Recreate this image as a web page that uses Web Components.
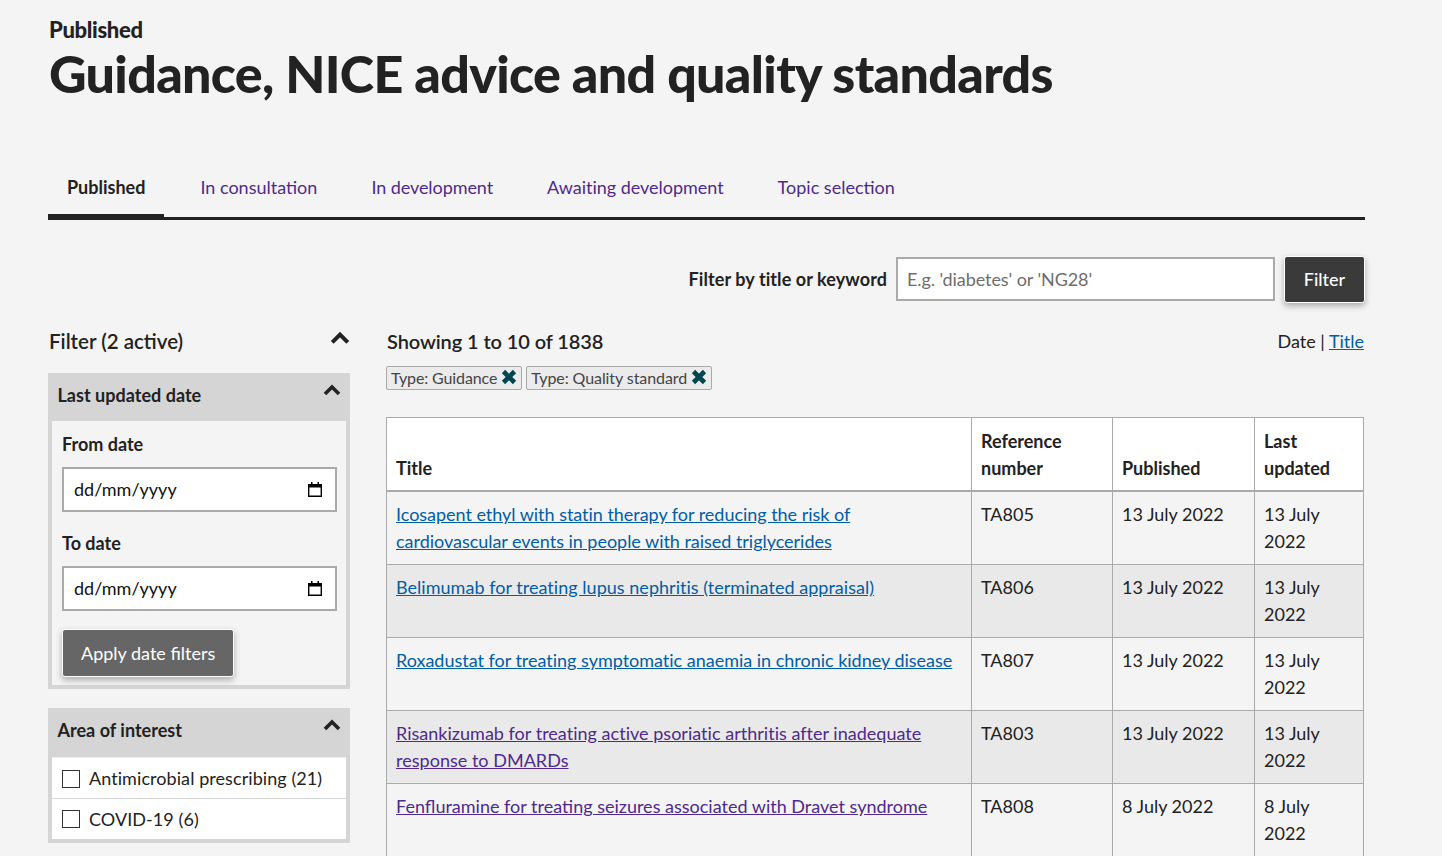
<!DOCTYPE html>
<html lang="en"><head><meta charset="utf-8"><title>Guidance, NICE advice and quality standards</title>
<style>
html,body{margin:0;padding:0;background:#f4f4f4;}
body{font:18px/27px Lato,"Open Sans",sans-serif;color:#222;height:856px;overflow:hidden;}
x-page{display:block;}
</style></head><body>
<x-page>
  <x-heading kicker="Published">Guidance, NICE advice and quality standards</x-heading>
  <x-tabs>
    <x-tab active>Published</x-tab>
    <x-tab>In consultation</x-tab>
    <x-tab style="letter-spacing:-.07px">In development</x-tab>
    <x-tab style="letter-spacing:-.02px">Awaiting development</x-tab>
    <x-tab>Topic selection</x-tab>
  </x-tabs>
  <x-search></x-search>
  <x-layout>
    <x-filters slot="side">
      <x-group title="Last updated date" variant="dates">
        <x-date label="From date"></x-date>
        <x-date label="To date"></x-date>
        <x-button>Apply date filters</x-button>
      </x-group>
      <x-group title="Area of interest" variant="checks">
        <x-check>Antimicrobial prescribing (21)</x-check>
        <x-check>COVID-19 (6)</x-check>
      </x-group>
    </x-filters>
    <x-results slot="main"></x-results>
  </x-layout>
</x-page>
<script>
const chevron=(w,h)=>`<svg width="${w}" height="${h}" viewBox="0 0 18 12" aria-hidden="true"><path d="M2 10 L9 3 L16 10" fill="none" stroke="#222" stroke-width="3.6" stroke-linejoin="miter"/></svg>`;
function def(name,css,html){
  customElements.define(name,class extends HTMLElement{
    constructor(){super();this.attachShadow({mode:'open'});}
    connectedCallback(){
      const h=typeof html==='function'?html(this):html;
      this.shadowRoot.innerHTML=`<style>${css}</style>${h}`;
    }
  });
}
def('x-heading',`:host{display:block;padding:16px 48px 0 49px}
p{margin:0;font-weight:900;font-size:22px;line-height:27px;letter-spacing:-.33px;color:#222}
h1{margin:0;font-weight:900;font-size:52px;line-height:61px;letter-spacing:-.7px;color:#222}`,
el=>`<p>${el.getAttribute('kicker')}</p><h1><slot></slot></h1>`);
def('x-tabs',`:host{display:flex;gap:18px;margin:53px 77px 0 48px;border-bottom:3px solid #222;height:60px;align-items:stretch}`,`<slot></slot>`);
def('x-tab',`:host{display:block;padding:17px 18px 0;color:#4f2a8c}
:host([active]){color:#222;font-weight:700;padding:17px 19px 0;border-bottom:6px solid #222;margin-bottom:-3px}`,`<slot></slot>`);
def('x-search',`:host{display:flex;justify-content:flex-end;align-items:flex-start;margin:37px 77px 0 48px;height:71px}
label{font-weight:700;line-height:45px;margin-right:9px;letter-spacing:.08px}
.i{box-sizing:border-box;width:379px;height:44px;background:#fff;border:2px solid #aaa;padding:0 9px;line-height:41px;color:#6e6e6e;margin-right:9px;letter-spacing:-.08px}
.b{box-sizing:border-box;width:81px;height:47px;margin-top:-1px;background:#3a3a3a;color:#fff;border:1px solid #fff;border-radius:3px;text-align:center;line-height:45px;box-shadow:0 3px 6px rgba(0,0,0,.3);font-weight:500}`,
`<label>Filter by title or keyword</label><div class="i">E.g. 'diabetes' or 'NG28'</div><div class="b">Filter</div>`);
def('x-layout',`:host{display:grid;grid-template-columns:302px 978px;column-gap:36px;margin-left:48px}`,`<slot name="side"></slot><slot name="main"></slot>`);
def('x-filters',`:host{display:block}
.t{display:flex;justify-content:space-between;align-items:flex-start;font-size:20.500px;line-height:27px;padding-left:1px;height:45px;color:#222;font-weight:600}
svg{margin:3px 0 0 0}
.t span{display:block}
::slotted(x-group){margin-bottom:19px}`,
`<div class="t"><span>Filter (2 active)</span><span style="line-height:0">${chevron(20,14)}</span></div><slot></slot>`);
def('x-group',`:host{display:block;background:#d5d5d5;padding:0 4px 4px}
.h{display:flex;justify-content:space-between;height:48px;line-height:45px;padding:0 5px 0 6px;font-weight:700;color:#222;letter-spacing:.02px}
.h span:first-child{margin-left:-.5px}
.h span:last-child{line-height:0;padding-top:11px}
.b{background:#f4f4f4;padding:10px 9px 8px 10px}
:host([variant=checks]) .h{height:49px}
:host([variant=checks]) .b{background:#fff;padding:0;border-top:1px solid #eee}`,
el=>`<div class="h"><span>${el.getAttribute('title')}</span><span>${chevron(18,12)}</span></div><div class="b"><slot></slot></div>`);
def('x-date',`:host{display:block;margin-bottom:18px}
label{display:block;font-weight:700;line-height:27px;margin-bottom:9px}
.i{box-sizing:border-box;height:45px;background:#fff;border:2px solid #aaa;display:flex;align-items:center;justify-content:space-between;padding:0 13px 0 10px;color:#111}
svg{display:block}`,
el=>`<label>${el.getAttribute('label')}</label><div class="i"><span>dd/mm/yyyy</span><svg width="14" height="15" viewBox="0 0 14 15" aria-hidden="true"><path d="M.7 2.700h12.600v11.600H.7z" fill="none" stroke="#000" stroke-width="1.400"/><path d="M0 2h14v3.500H0zM3 0h1.500v2H3zM9.500 0H11v2H9.500z" fill="#000"/></svg></div>`);
def('x-button',`:host{display:inline-block;box-sizing:border-box;height:48px;padding:0 18px;background:#666;color:#fff;border:1px solid #fff;border-radius:3px;line-height:46px;box-shadow:0 3px 6px rgba(0,0,0,.3)}`,`<slot></slot>`);
def('x-check',`:host{display:flex;align-items:center;gap:9px;height:40px;padding:0 0 0 10px;border-bottom:1px solid #d5d5d5;background:#fff;color:#222;line-height:39px;letter-spacing:.07px}
:host(:last-child){border-bottom:0}
:host(:first-child) i{margin-top:2px}
i{display:block;box-sizing:border-box;width:18px;height:18px;border:1px solid #333;background:#fff}`,`<i></i><slot></slot>`);
def('x-tag',`:host{display:inline-flex;align-items:center;box-sizing:border-box;height:24px;background:#ebebeb;border:1px solid #aaa;border-radius:2px;padding:0 4px;font-size:16px;color:#444;line-height:22px;gap:4px;letter-spacing:-.12px}
svg{display:block;margin-top:-3px}`,
`<slot></slot><svg width="16" height="16" viewBox="0 0 16 16" aria-hidden="true"><path d="M2.500 2.500 L13.500 13.500 M13.500 2.500 L2.500 13.500" stroke="#004650" stroke-width="4.600" fill="none"/></svg>`);
const rows=[
 ['Icosapent ethyl with statin therapy for reducing the risk of cardiovascular events in people with raised triglycerides','TA805','13 July 2022','13 July 2022',0,-.03],
 ['Belimumab for treating lupus nephritis (terminated appraisal)','TA806','13 July 2022','13 July 2022',0,.03],
 ['Roxadustat for treating symptomatic anaemia in chronic kidney disease','TA807','13 July 2022','13 July 2022',0,-.015],
 ['Risankizumab for treating active psoriatic arthritis after inadequate response to DMARDs','TA803','13 July 2022','13 July 2022',1,.02],
 ['Fenfluramine for treating seizures associated with Dravet syndrome','TA808','8 July 2022','8 July 2022',1,0]];
def('x-results',`:host{display:block}
.top{display:flex;justify-content:space-between;line-height:27px;height:38px}
.s{font-size:20px;font-weight:600;padding-left:1px;letter-spacing:-.09px}
a{color:#005ea5;text-decoration:underline}
a.v{color:#4f2a8c}
.tags{display:flex;gap:4px;height:51px}
table{border-collapse:collapse;width:977px;table-layout:fixed}
th,td{border:1px solid #aaa;text-align:left;vertical-align:top;line-height:27px}
th{background:#fff;vertical-align:bottom;font-weight:700;border-bottom:2px solid #aaa;padding:10px 9px 8px}
td{padding:9px}
tbody tr:nth-child(even) td{background:#e9e9e9}`,
`<div class="top"><span class="s">Showing 1 to 10 of 1838</span><span>Date | <a>Title</a></span></div>
<div class="tags"><x-tag>Type: Guidance</x-tag><x-tag style="letter-spacing:-.08px">Type: Quality standard</x-tag></div>
<table><colgroup><col style="width:585px"><col style="width:141px"><col style="width:142px"><col style="width:109px"></colgroup>
<thead><tr><th>Title</th><th>Reference number</th><th>Published</th><th>Last updated</th></tr></thead>
<tbody>${rows.map(r=>`<tr><td><a class="${r[4]?'v':''}" style="letter-spacing:${r[5]}px">${r[0]}</a></td><td>${r[1]}</td><td>${r[2]}</td><td>${r[3]}</td></tr>`).join('')}</tbody></table>`);
</script>
</body></html>
